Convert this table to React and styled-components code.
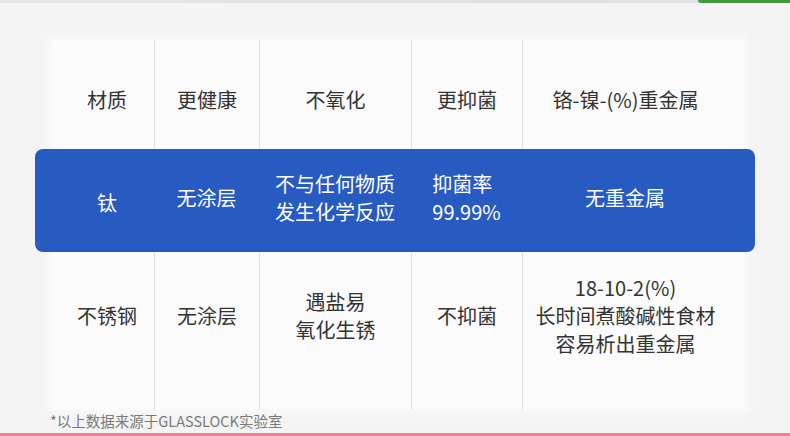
import React from "react";
import styled, { createGlobalStyle } from "styled-components";

const Global = createGlobalStyle`
  html, body { margin: 0; padding: 0; }
  body { background: #f4f4f4; font-family: "Noto Sans CJK SC", "Noto Sans", sans-serif; }
`;

const COLS = "94px 105px 152px 111px 206px";

const Page = styled.div`
  width: 790px;
  height: 436px;
  overflow: hidden;
  background: #f4f4f4;
  display: flex;
  flex-direction: column;
`;

const TopStrip = styled.div`
  height: 3px;
  display: flex;
  background: linear-gradient(90deg, #e6e6e6 0%, #e2e2e2 40%, #dfe0e3 70%, #e3e3e3 100%);
`;

const GreenTab = styled.div`
  margin-left: auto;
  width: 92px;
  background: #3f9a41;
  border-bottom-left-radius: 6px;
`;

const Card = styled.div`
  margin: 37px 0 0 52px;
  width: 693px;
  box-sizing: border-box;
  padding: 0 17px 0 8px;
  background: #fbfbfb;
  box-shadow: 0 0 10px 4px rgba(252, 252, 252, 0.7);
  display: flex;
  flex-direction: column;
`;

const Row = styled.div`
  display: grid;
  grid-template-columns: ${COLS};
  height: ${(p) => p.$h}px;
`;

const HiRow = styled.div`
  display: grid;
  grid-template-columns: ${COLS};
  height: 103px;
  box-sizing: border-box;
  margin: 0 -27px 0 -25px;
  padding: 0 27px 6px 25px;
  background: #285bc1;
  border-radius: 8px;
  position: relative;
  z-index: 1;
`;

const Cell = styled.div`
  display: flex;
  align-items: center;
  justify-content: center;
  text-align: center;
  box-sizing: border-box;
  font-size: 20px;
  line-height: 28px;
  color: ${(p) => (p.$light ? "#ffffff" : "#333333")};
  border-left: ${(p) => (p.$div ? "1px solid #e2e2e2" : "none")};
  padding-top: ${(p) => p.$pt || 0}px;
  padding-bottom: ${(p) => p.$pb || 0}px;
`;

const Nudge = styled.span`
  position: relative;
  top: ${(p) => p.$dy}px;
`;

const LeftBlock = styled.div`
  text-align: left;
`;

const Footnote = styled.div`
  margin: 2px 0 0 50px;
  font-size: 14.5px;
  line-height: 18px;
  color: #7a7a7a;
`;

const PinkStrip = styled.div`
  margin-top: auto;
  height: 3px;
  background: #f07e97;
`;

const lines = (arr) =>
  arr.map((t, i) => (
    <React.Fragment key={i}>
      {i > 0 && <br />}
      {t}
    </React.Fragment>
  ));

export default function App() {
  const top = ["材质", "更健康", "不氧化", "更抑菌", "铬-镍-(%)重金属"];
  const bottom = [
    ["不锈钢"],
    ["无涂层"],
    ["遇盐易", "氧化生锈"],
    ["不抑菌"],
    ["18-10-2(%)", "长时间煮酸碱性食材", "容易析出重金属"],
  ];
  return (
    <Page>
      <Global />
      <TopStrip>
        <GreenTab />
      </TopStrip>
      <Card>
        <Row $h={109}>
          {top.map((t, i) => (
            <Cell key={i} $div={i > 0} $pt={11}>
              {t}
            </Cell>
          ))}
        </Row>
        <HiRow>
          <Cell $light>
            <Nudge $dy={5}>钛</Nudge>
          </Cell>
          <Cell $light>无涂层</Cell>
          <Cell $light>{lines(["不与任何物质", "发生化学反应"])}</Cell>
          <Cell $light>
            <LeftBlock>{lines(["抑菌率", "99.99%"])}</LeftBlock>
          </Cell>
          <Cell $light>无重金属</Cell>
        </HiRow>
        <Row $h={158}>
          {bottom.map((t, i) => (
            <Cell key={i} $div={i > 0} $pb={30}>
              <div>{lines(t)}</div>
            </Cell>
          ))}
        </Row>
      </Card>
      <Footnote>*以上数据来源于GLASSLOCK实验室</Footnote>
      <PinkStrip />
    </Page>
  );
}
